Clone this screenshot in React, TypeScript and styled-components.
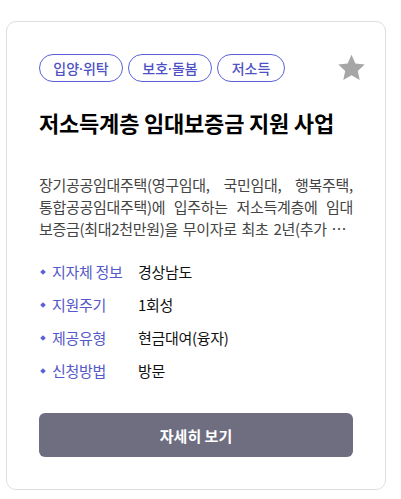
import React from 'react';
import styled, { createGlobalStyle } from 'styled-components';

const GlobalStyle = createGlobalStyle`
    body {
        margin: 0;
        background: #ffffff;
        font-family: "Noto Sans CJK KR", "Noto Sans", sans-serif;
    }
`;

const Card = styled.div`
    box-sizing: border-box;
    margin: 21px 0 0 6px;
    width: 380px;
    padding: 32px;
    border: 1px solid #dedede;
    border-radius: 10px;
    background: #fff;
    display: flex;
    flex-direction: column;
`;

const TopRow = styled.div`
    display: flex;
    align-items: center;
    justify-content: space-between;
`;

const Tags = styled.div`
    display: flex;
    gap: 5px;
`;

const Tag = styled.span<{ width: number }>`
    box-sizing: border-box;
    width: ${props => props.width}px;
    height: 28px;
    border: 1px solid #5b60d8;
    border-radius: 14px;
    color: #4e52c4;
    font-family: "Noto Sans", "Noto Sans CJK KR", sans-serif;
    font-size: 14px;
    font-weight: 500;
    display: flex;
    align-items: center;
    justify-content: center;
`;

const StarButton = styled.button`
    border: 0;
    background: none;
    padding: 0;
    margin-right: -13px;
    display: flex;
    cursor: pointer;
`;

const Title = styled.h2`
    margin: 26px 0 0;
    font-size: 22px;
    line-height: 28px;
    font-weight: 700;
    color: #000;
    letter-spacing: -0.2px;
`;

const Description = styled.p`
    margin: 38px 0 0;
    font-size: 15px;
    line-height: 22px;
    color: #444;
    text-align: justify;
    word-break: keep-all;
    letter-spacing: -0.3px;
    display: -webkit-box;
    -webkit-line-clamp: 3;
    -webkit-box-orient: vertical;
    overflow: hidden;
`;

const InfoList = styled.ul`
    list-style: none;
    margin: 21px 0 0;
    padding: 0;
    display: flex;
    flex-direction: column;
    gap: 11px;
`;

const InfoRow = styled.li`
    display: flex;
    align-items: center;
    font-size: 15px;
    line-height: 22px;
`;

const Label = styled.span`
    width: 99px;
    flex-shrink: 0;
    color: #5458c8;
    display: flex;
    align-items: center;
    letter-spacing: -0.3px;

    &::before {
        content: '';
        width: 4px;
        height: 4px;
        margin: 0 7px 0 2px;
        background: #5b60d8;
        transform: rotate(45deg);
    }
`;

const Value = styled.span`
    color: #111;
    letter-spacing: -0.3px;
`;

const DetailButton = styled.button`
    margin-top: 31px;
    height: 44px;
    border: 0;
    border-radius: 6px;
    background: #6e6e80;
    color: #fff;
    font-family: inherit;
    font-size: 15px;
    font-weight: 700;
    cursor: pointer;
`;

const tags = [
    { name: '입양·위탁', width: 84 },
    { name: '보호·돌봄', width: 84 },
    { name: '저소득', width: 68 },
];

const info = [
    { label: '지자체 정보', value: '경상남도' },
    { label: '지원주기', value: '1회성' },
    { label: '제공유형', value: '현금대여(융자)' },
    { label: '신청방법', value: '방문' },
];

const StarIcon = () => (
    <svg width="29" height="28" viewBox="0 0 24 23">
        <path
            d="M12 0.6l3.2 7.1 7.7 0.9-5.7 5.3 1.6 7.6L12 17.6l-6.8 3.9 1.6-7.6L1.1 8.6l7.7-0.9z"
            fill="#a6a6a6"
        />
    </svg>
);

const App: React.FC = () => (
    <>
        <GlobalStyle />
        <Card>
            <TopRow>
                <Tags>
                    {tags.map(tag => (
                        <Tag key={tag.name} width={tag.width}>{tag.name}</Tag>
                    ))}
                </Tags>
                <StarButton aria-label="즐겨찾기">
                    <StarIcon />
                </StarButton>
            </TopRow>
            <Title>저소득계층 임대보증금 지원 사업</Title>
            <Description>
                장기공공임대주택(영구임대, 국민임대, 행복주택, 통합공공임대주택)에 입주하는 저소득계층에 임대 보증금(최대2천만원)을 무이자로 최초 2년(추가 2년 연장 가능) 동안 지원합니다.
            </Description>
            <InfoList>
                {info.map(item => (
                    <InfoRow key={item.label}>
                        <Label>{item.label}</Label>
                        <Value>{item.value}</Value>
                    </InfoRow>
                ))}
            </InfoList>
            <DetailButton>자세히 보기</DetailButton>
        </Card>
    </>
);

export default App;
